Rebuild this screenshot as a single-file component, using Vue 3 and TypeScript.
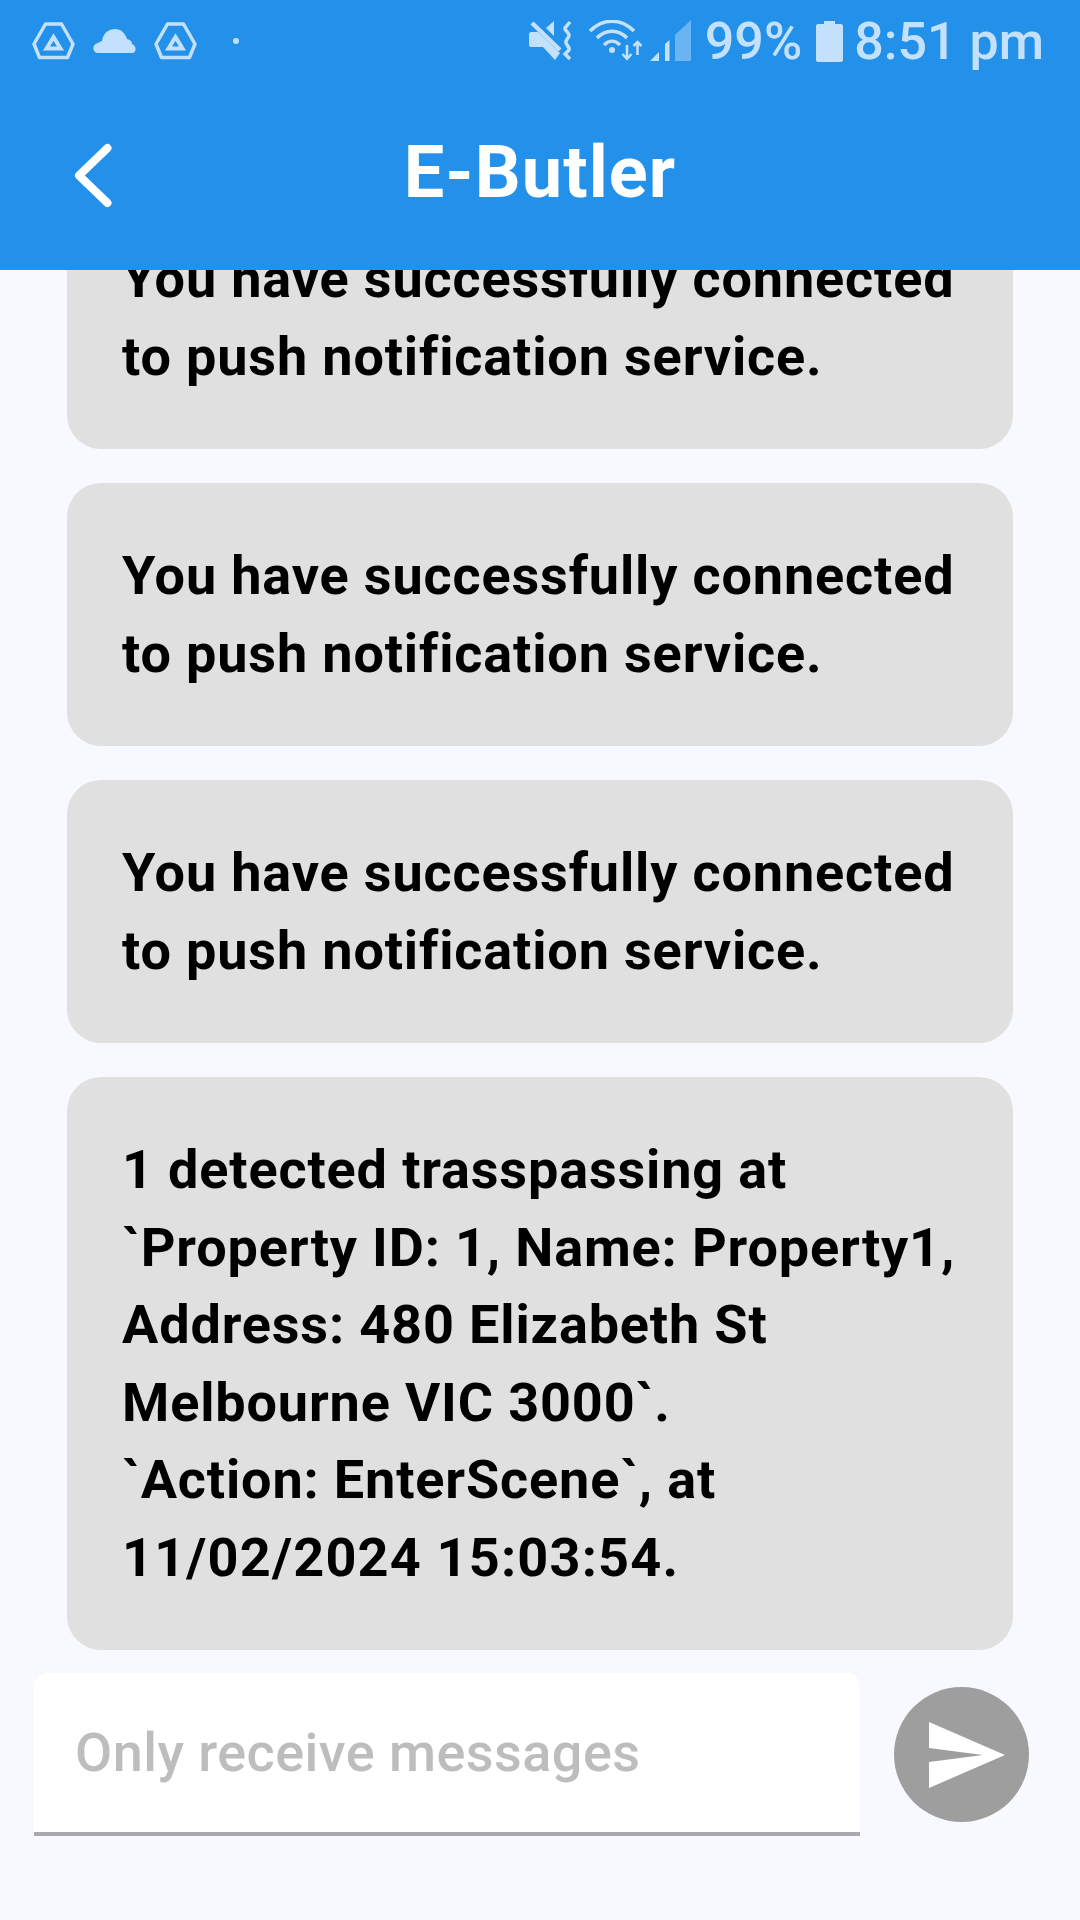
<template>
  <div class="screen">
    <header class="appbar">
      <div class="status">
        <div class="status__left">
          <svg viewBox="0 0 43 38" width="43" height="38">
            <path d="M13.5 2 H29.5 L41 22 L35.5 35.5 H7.5 L2 22 Z" fill="none" stroke="currentColor" stroke-width="3.5" stroke-linejoin="round" />
            <path d="M21.5 15 L28.5 26.5 H14.5 Z" fill="none" stroke="currentColor" stroke-width="4" />
          </svg>
          <svg viewBox="0 0 43 24" width="43" height="24">
            <path d="M4 24 C-1 23 -1 15 5 14 C7 13 8 12 9 12 C10 4 16 0 22 0 C28 0 32 4 34 10 C38 11 39 13 39 15 C43 16 44 23 40 24 Z" fill="currentColor" />
          </svg>
          <svg viewBox="0 0 43 38" width="43" height="38">
            <path d="M13.5 2 H29.5 L41 22 L35.5 35.5 H7.5 L2 22 Z" fill="none" stroke="currentColor" stroke-width="3.5" stroke-linejoin="round" />
            <path d="M21.5 15 L28.5 26.5 H14.5 Z" fill="none" stroke="currentColor" stroke-width="4" />
          </svg>
          <span class="status__dot"></span>
        </div>
        <div class="status__right">
          <svg viewBox="0 0 44 42" width="44" height="42">
            <path d="M3 3 L31 30" stroke="currentColor" stroke-width="4.5" fill="none" />
            <path d="M0 14 C0 13 1 12 2 12 H9 L31 33 L26 40 L14 27 H2 C1 27 0 26 0 25 Z" fill="currentColor" />
            <path d="M25 1 V16 L17 8 Z" fill="currentColor" />
            <path d="M41 2 L36 8 C35 10 41 13 40 16 C39 19 36 20 37 23 C38 26 41 27 40 30 L36 34 L41 39" stroke="currentColor" stroke-width="3.5" fill="none" />
          </svg>
          <svg class="status__wifi" viewBox="0 0 54 42" width="54" height="42">
            <path d="M1 11 C14 -2 32 -2 45 11" stroke="currentColor" stroke-width="3.5" fill="none" />
            <path d="M8 18 C17 9 29 9 38 18" stroke="currentColor" stroke-width="3.5" fill="none" />
            <path d="M15 25 C20 20 26 20 31 25" stroke="currentColor" stroke-width="3.5" fill="none" />
            <circle cx="23" cy="30" r="3" fill="currentColor" />
            <path d="M38 25 V39 M33.5 34 L38 39 L42.5 34" stroke="currentColor" stroke-width="2.5" fill="none" />
            <path d="M48.5 35 V22 M44.5 26 L48.5 22 L52.5 26" stroke="currentColor" stroke-width="2.5" fill="none" />
          </svg>
          <svg class="status__signal" viewBox="0 0 41 42" width="41" height="42">
            <path d="M0 41 L9 32 V41 Z" fill="currentColor" />
            <path d="M15 41 V24 L19.5 20 V41 Z" fill="currentColor" />
            <path d="M25 41 V15 L41 0 V41 Z" fill="currentColor" opacity="0.45" />
          </svg>
          <span class="status__pct">99%</span>
          <svg class="status__battery" viewBox="0 0 27 41" width="27" height="41">
            <path d="M8 0 H19 V3 H25 C26 3 27 4 27 5 V39 C27 40 26 41 25 41 H2 C1 41 0 40 0 39 V5 C0 4 1 3 2 3 H8 Z" fill="currentColor" />
          </svg>
          <span class="status__time">8:51 pm</span>
        </div>
      </div>
      <div class="toolbar">
        <button class="toolbar__back" type="button" aria-label="Back">
          <svg viewBox="0 0 44 72" width="44" height="72">
            <path d="M35.5 8 L7 35.5 L35.5 63" fill="none" stroke="#fff" stroke-width="8" stroke-linecap="round" stroke-linejoin="round" />
          </svg>
        </button>
        <h1 class="toolbar__title">E-Butler</h1>
      </div>
    </header>

    <main class="messages">
      <div v-for="(msg, i) in messages" :key="i" class="bubble">
        <p
          v-for="(line, j) in msg"
          :key="j"
          class="bubble__line"
          :class="{ 'bubble__line--date': /^\d+\//.test(line) }"
        >
          {{ line }}
        </p>
      </div>
    </main>

    <footer class="composer">
      <input class="composer__input" type="text" placeholder="Only receive messages" disabled />
      <button class="composer__send" type="button" aria-label="Send">
        <svg viewBox="0 0 76 66" width="76" height="66">
          <path d="M0 0 L76 33 L0 66 V40 L54 33 L0 26 Z" fill="#fff" />
        </svg>
      </button>
    </footer>
  </div>
</template>

<script setup lang="ts">
const pushMsg = ['You have successfully connected', 'to push notification service.']

const messages: string[][] = [
  pushMsg,
  pushMsg,
  pushMsg,
  [
    '1 detected trasspassing at',
    '`Property ID: 1, Name: Property1,',
    'Address: 480 Elizabeth St',
    'Melbourne VIC 3000`.',
    '`Action: EnterScene`, at',
    '11/02/2024 15:03:54.',
  ],
]
</script>

<style>
html,
body {
  margin: 0;
  background: #f8f9ff;
}
</style>

<style scoped>
.screen {
  display: flex;
  flex-direction: column;
  width: 1080px;
  height: 1920px;
  overflow: hidden;
  background: #f8f9ff;
  font-family: Roboto, "Liberation Sans", sans-serif;
}

.appbar {
  flex: none;
  height: 270px;
  background: #2390ea;
  position: relative;
  z-index: 1;
}

.status {
  display: flex;
  align-items: center;
  justify-content: space-between;
  height: 82px;
  padding: 0 36px 0 32px;
  color: #c3e1fc;
}

.status__left,
.status__right {
  display: flex;
  align-items: center;
}

.status__left {
  gap: 18px;
}

.status__dot {
  width: 6px;
  height: 6px;
  margin-left: 18px;
  border-radius: 50%;
  background: currentColor;
}

.status__pct,
.status__time {
  font-size: 52px;
  font-weight: 500;
  line-height: 60px;
  white-space: nowrap;
}

.status__wifi {
  margin-left: 16px;
}

.status__signal {
  margin-left: 7px;
}

.status__pct {
  margin-left: 14px;
  position: relative;
  top: 1px;
}

.status__battery {
  margin: 0 11px 0 14px;
}

.status__time {
  position: relative;
  top: 1px;
}

.toolbar {
  position: relative;
  display: flex;
  align-items: center;
  justify-content: center;
  height: 182px;
}

.toolbar__back {
  position: absolute;
  left: 72px;
  top: 58px;
  padding: 0;
  border: 0;
  background: none;
  line-height: 0;
}

.toolbar__title {
  margin: 0;
  color: #fff;
  font-size: 72px;
  font-weight: 700;
  letter-spacing: 1.1px;
  line-height: 84px;
}

.messages {
  flex: 1;
  min-height: 0;
  display: flex;
  flex-direction: column;
  justify-content: flex-end;
  gap: 34px;
  padding: 0 67px;
  overflow: hidden;
}

.bubble {
  flex: none;
  padding: 54px 55px;
  border-radius: 34px;
  background: #e0e0e0;
}

.bubble__line {
  margin: 0;
  color: #000;
  font-size: 54px;
  font-weight: 700;
  letter-spacing: 0.85px;
  line-height: 77.5px;
  white-space: nowrap;
}

.bubble__line--date {
  letter-spacing: 1.2px;
}

.composer {
  flex: none;
  display: flex;
  align-items: center;
  gap: 34px;
  padding: 23px 47px 84px 34px;
}

.composer__input {
  width: 826px;
  height: 163px;
  box-sizing: border-box;
  padding: 0 41px;
  border: 0;
  border-bottom: 4px solid #a9a9ae;
  border-radius: 14px 14px 0 0;
  outline: none;
  background: #fff;
  font-family: inherit;
  font-size: 54px;
  font-weight: 500;
  letter-spacing: 0.45px;
}

.composer__input::placeholder {
  color: #bdbdbd;
  opacity: 1;
}

.composer__send {
  display: flex;
  align-items: center;
  justify-content: center;
  width: 135px;
  height: 135px;
  padding: 0 0 0 10px;
  border: 0;
  border-radius: 50%;
  background: #9e9e9e;
}
</style>
